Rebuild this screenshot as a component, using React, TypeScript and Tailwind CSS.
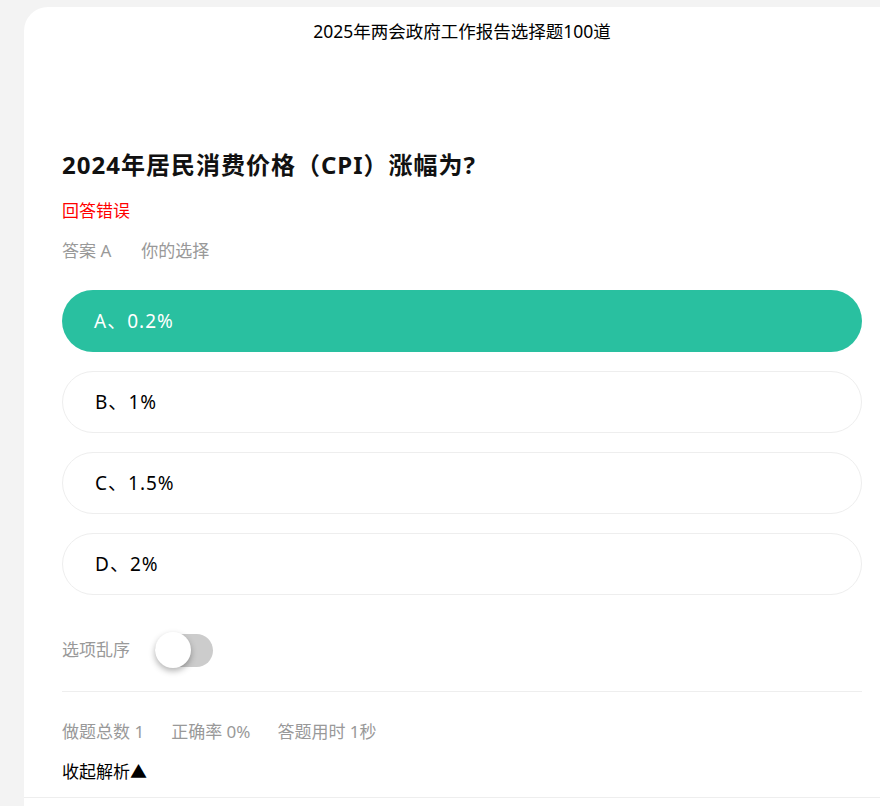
import { useState } from 'react';

const options = [
  { key: 'A', text: '0.2%' },
  { key: 'B', text: '1%' },
  { key: 'C', text: '1.5%' },
  { key: 'D', text: '2%' },
];

export default function App() {
  const [shuffle, setShuffle] = useState(false);
  const selected = 'A';

  return (
    <div
      className="min-h-screen w-full overflow-hidden bg-[#f3f3f3] pt-[7px]"
      style={{ fontFamily: '"Noto Sans", "Noto Sans CJK SC", sans-serif' }}
    >
      <div className="ml-[24px] w-[876px] min-h-[820px] rounded-tl-[24px] bg-white">
        {/* header */}
        <div className="pt-[12px] text-center text-[17.5px] leading-[24px] text-black">
          2025年两会政府工作报告选择题100道
        </div>

        <div className="border-b border-[#eeeeee] px-[38px] pb-[13px]">
          <h1 className="mt-[106px] text-[24px] font-bold leading-[32px] tracking-[1px] text-[#111]">
            2024年居民消费价格（CPI）涨幅为?
          </h1>

          <div className="mt-[18px] text-[17px] leading-[24px] text-[#ff0000]">回答错误</div>

          <div className="mt-[16px] flex gap-[30px] text-[17px] leading-[24px] text-[#999]">
            <span>答案 A</span>
            <span>你的选择</span>
          </div>

          {/* options */}
          <div className="mt-[27px] flex flex-col gap-[19px]">
            {options.map((o) => (
              <div
                key={o.key}
                className={
                  o.key === selected
                    ? 'flex h-[62px] items-center rounded-full bg-[#29c0a0] pl-[32px] text-[19px] tracking-[1px] text-white'
                    : 'flex h-[62px] items-center rounded-full border border-[#eeeeee] pl-[32px] text-[19px] tracking-[1px] text-black'
                }
              >
                {o.key}、{o.text}
              </div>
            ))}
          </div>

          {/* shuffle toggle */}
          <div className="mt-[36px] flex h-[38px] items-center gap-[25px]">
            <span className="text-[17px] text-[#999]">选项乱序</span>
            <button
              onClick={() => setShuffle(!shuffle)}
              className={
                shuffle
                  ? 'relative h-[33px] w-[58px] rounded-full bg-[#29c0a0]'
                  : 'relative h-[33px] w-[58px] rounded-full bg-[#cccccc]'
              }
            >
              <span
                className={
                  shuffle
                    ? 'absolute right-0 top-1/2 h-[36px] w-[36px] -translate-y-1/2 rounded-full bg-white shadow-[0_3px_6px_rgba(0,0,0,0.3)]'
                    : 'absolute left-0 top-1/2 h-[36px] w-[36px] -translate-y-1/2 rounded-full bg-white shadow-[0_3px_6px_rgba(0,0,0,0.3)]'
                }
              />
            </button>
          </div>

          <div className="mt-[22px] border-t border-[#eeeeee]" />

          <div className="mt-[28px] flex gap-[27px] text-[17px] leading-[24px] text-[#999]">
            <span>做题总数 1</span>
            <span>正确率 0%</span>
            <span>答题用时 1秒</span>
          </div>

          <div className="mt-[16px] text-[17px] leading-[24px] text-black">收起解析▲</div>
        </div>
      </div>
    </div>
  );
}
